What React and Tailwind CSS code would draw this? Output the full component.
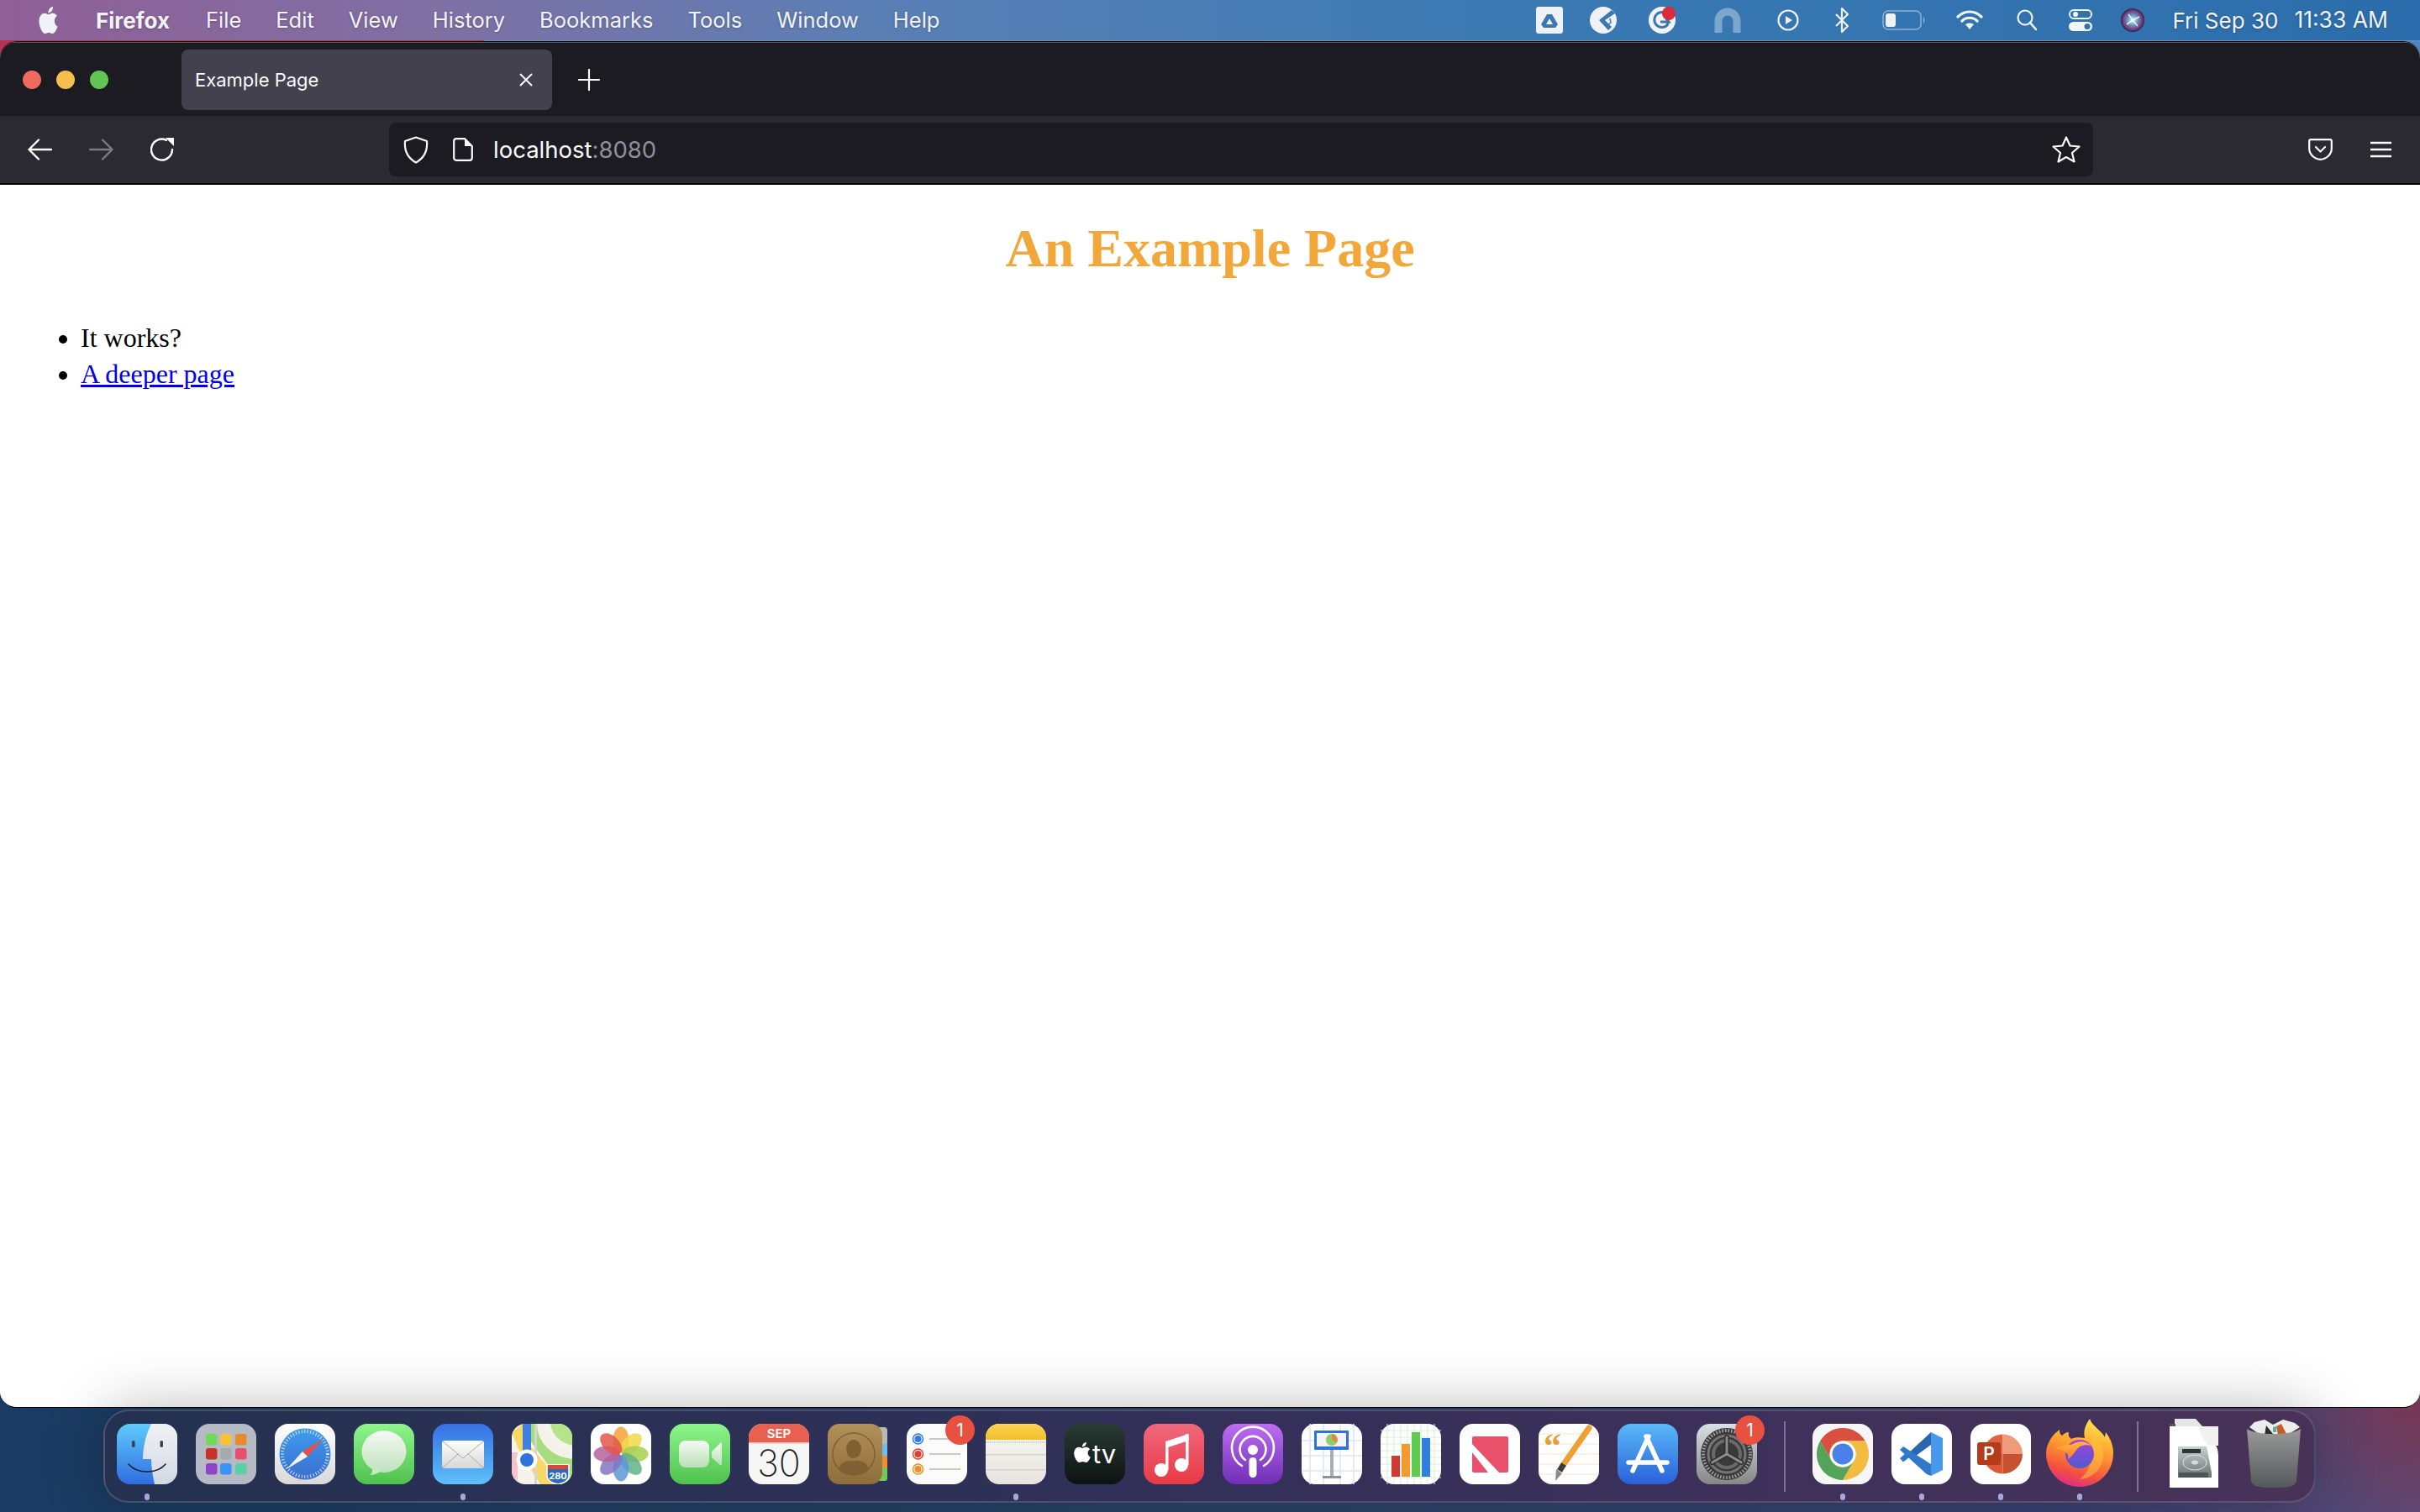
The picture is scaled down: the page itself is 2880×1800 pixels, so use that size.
import React from 'react'

const applePath =
  'M12.152 6.896c-.948 0-2.415-1.078-3.96-1.04-2.04.027-3.91 1.183-4.961 3.014-2.117 3.675-.546 9.103 1.519 12.09 1.013 1.454 2.208 3.09 3.792 3.039 1.52-.065 2.09-.987 3.935-.987 1.831 0 2.35.987 3.96.948 1.637-.026 2.676-1.48 3.676-2.948 1.156-1.688 1.636-3.325 1.662-3.415-.039-.013-3.182-1.221-3.22-4.857-.026-3.04 2.48-4.494 2.597-4.559-1.429-2.09-3.623-2.324-4.39-2.376-2-.156-3.675 1.09-4.61 1.09zM15.53 3.83c.843-1.012 1.4-2.427 1.245-3.83-1.207.052-2.662.805-3.532 1.818-.78.896-1.454 2.338-1.273 3.714 1.338.104 2.715-.688 3.559-1.701'

const Grad = ({ id, from, to, x2 = 0, y2 = 1 }) => (
  <linearGradient id={id} x1="0" y1="0" x2={x2} y2={y2}>
    <stop offset="0" stopColor={from} />
    <stop offset="1" stopColor={to} />
  </linearGradient>
)

const Icon = ({ children }) => (
  <svg width="72" height="72" viewBox="0 0 72 72" className="block overflow-visible">
    {children}
  </svg>
)

const Finder = () => (
  <Icon>
    <defs>
      <Grad id="fi1" from="#5fcbfb" to="#2f6de2" />
      <Grad id="fi2" from="#f0f1f4" to="#d3d9e5" />
      <clipPath id="fic"><rect width="72" height="72" rx="16" /></clipPath>
    </defs>
    <g clipPath="url(#fic)">
      <rect width="72" height="72" fill="url(#fi1)" />
      <path d="M41 0 C35 12 31 28 31 42 L41 42 C41 52 43 63 45 72 L72 72 L72 0 Z" fill="url(#fi2)" />
    </g>
    <rect x="18" y="20" width="3.5" height="8" rx="1.7" fill="#3a3f4a" />
    <rect x="51.5" y="20" width="3.5" height="8" rx="1.7" fill="#3a3f4a" />
    <path d="M14 48 C24 60 48 60 58 48" fill="none" stroke="#1c1f28" strokeWidth="1.6" strokeLinecap="round" />
  </Icon>
)

const Launchpad = () => {
  const tiles = [
    [12, 12, '#6fdc55'], [29, 12, '#f8c234'], [47, 12, '#e88a2a'],
    [12, 29, '#c8322a'], [29, 29, '#a5aaad'], [47, 29, '#e8506a'],
    [12, 47, '#8f44c8'], [29, 47, '#3a94f5'], [47, 47, '#5ccfa8'],
  ]
  return (
    <Icon>
      <rect width="72" height="72" rx="16" fill="#b6bac5" />
      {tiles.map(([x, y, c]) => (
        <rect key={x + '-' + y} x={x} y={y} width="13.5" height="13.5" rx="3" fill={c} />
      ))}
    </Icon>
  )
}

const Safari = () => (
  <Icon>
    <defs>
      <Grad id="sa1" from="#ffffff" to="#d9d9d9" />
      <Grad id="sa2" from="#3f9bee" to="#3a6fd0" />
    </defs>
    <rect width="72" height="72" rx="16" fill="url(#sa1)" />
    <circle cx="36" cy="36" r="30.5" fill="url(#sa2)" />
    <circle cx="36" cy="36" r="27" fill="none" stroke="#ffffff" strokeOpacity="0.8" strokeWidth="4" strokeDasharray="1 2.5" />
    <polygon points="58,18 33,33 39,39" fill="#e8503f" />
    <polygon points="14,54 33,33 39,39" fill="#f3f3f3" />
  </Icon>
)

const Messages = () => (
  <Icon>
    <defs>
      <Grad id="me1" from="#8ef58b" to="#4fc24d" />
      <Grad id="me2" from="#f6f9f4" to="#bfe2bd" />
    </defs>
    <rect width="72" height="72" rx="16" fill="url(#me1)" />
    <ellipse cx="36" cy="33" rx="26.5" ry="25" fill="url(#me2)" />
    <path d="M22 50 C23 57 21 60 19 61 C25 61 31 58 33 55 Z" fill="#c8e7c5" />
  </Icon>
)

const Mail = () => (
  <Icon>
    <defs>
      <Grad id="ma1" from="#3570e4" to="#5fc0f9" />
      <Grad id="ma2" from="#ffffff" to="#d6d6d6" />
    </defs>
    <rect width="72" height="72" rx="16" fill="url(#ma1)" />
    <rect x="11" y="20" width="50" height="33" rx="3" fill="url(#ma2)" />
    <path d="M12 21 L36 41 L60 21 M12 52 L30 36 M60 52 L42 36" fill="none" stroke="#aaaaaa" strokeWidth="1" />
  </Icon>
)

const Maps = () => (
  <Icon>
    <defs>
      <clipPath id="mpc"><rect width="72" height="72" rx="16" /></clipPath>
    </defs>
    <g clipPath="url(#mpc)">
      <rect width="72" height="72" fill="#f5f3ea" />
      <path d="M32 0 C32 24 48 36 72 40 L72 72 L60 72 L22 20 L22 0 Z" fill="#a6dd7c" />
      <path d="M46 0 C48 14 58 22 72 26 L72 0 Z" fill="#b4e58a" />
      <path d="M34 0 C34 20 50 36 72 38" fill="none" stroke="#f4f1e6" strokeWidth="8" />
      <path d="M0 10 L8 30 L34 72 L60 72 L22 26 L14 0 Z" fill="#f7d766" />
      <rect x="0" y="34" width="7" height="38" fill="#f4c3cb" />
      <rect x="25" y="0" width="3" height="72" fill="#d6d6cd" transform="translate(2 0)" />
      <rect x="13" y="0" width="10" height="40" fill="#3f7fe0" />
      <circle cx="18" cy="43" r="12.5" fill="#ffffff" />
      <circle cx="18" cy="43" r="8" fill="#2f74dd" />
      <path d="M42 49 L68 49 L68 62 C68 68 60 71 55 72 C50 71 42 68 42 62 Z" fill="#2c6ac0" stroke="#ffffff" strokeWidth="1.5" />
      <rect x="43" y="49" width="24" height="5" fill="#d9463c" />
      <text x="55" y="66" textAnchor="middle" fontFamily="Inter, sans-serif" fontSize="11" fontWeight="700" fill="#ffffff">280</text>
    </g>
  </Icon>
)

const Photos = () => {
  const petals = [
    [0, '#f2a13a'], [45, '#f2d94a'], [90, '#a6cf4f'], [135, '#63b287'],
    [180, '#5e98d6'], [225, '#8574c0'], [270, '#b7609f'], [315, '#e2574a'],
  ]
  return (
    <Icon>
      <rect width="72" height="72" rx="16" fill="#ffffff" />
      {petals.map(([a, c]) => (
        <ellipse key={a} cx="36" cy="19.5" rx="9.5" ry="16" fill={c} fillOpacity="0.85" transform={`rotate(${a} 36 36)`} />
      ))}
      <circle cx="36" cy="36" r="1.4" fill="#ffffff" />
    </Icon>
  )
}

const FaceTime = () => (
  <Icon>
    <defs>
      <Grad id="ft1" from="#8ef58b" to="#4fc24d" />
      <Grad id="ft2" from="#f7faf5" to="#b9dfb6" />
    </defs>
    <rect width="72" height="72" rx="16" fill="url(#ft1)" />
    <rect x="11" y="20" width="36" height="32" rx="8" fill="url(#ft2)" />
    <path d="M50 33 L60 23 C61 22 62 23 62 24 L62 48 C62 49 61 50 60 49 L50 40 Z" fill="url(#ft2)" />
  </Icon>
)

const Calendar = () => (
  <Icon>
    <defs>
      <clipPath id="cac"><rect width="72" height="72" rx="16" /></clipPath>
    </defs>
    <g clipPath="url(#cac)">
      <rect width="72" height="72" fill="#f6f6f4" />
      <rect width="72" height="22" fill="#e8604f" />
      <rect y="22" width="72" height="1.5" fill="#f2c0b8" />
    </g>
    <text x="36" y="17" textAnchor="middle" fontFamily="Inter, sans-serif" fontSize="15" fontWeight="600" fill="#ffffff">SEP</text>
    <text x="36" y="62" textAnchor="middle" fontFamily="Inter, sans-serif" fontSize="43" fontWeight="200" fill="#222222">30</text>
  </Icon>
)

const Contacts = () => (
  <Icon>
    <defs>
      <Grad id="co1" from="#b1905a" to="#8f6d3a" />
    </defs>
    <rect x="50" y="4" width="21" height="22" rx="4" fill="#b9b9b4" />
    <rect x="50" y="24" width="21" height="16" fill="#6fbcf0" />
    <rect x="50" y="38" width="21" height="16" fill="#ee9030" />
    <rect x="50" y="52" width="21" height="16" rx="3" fill="#6ecb5c" />
    <rect width="65" height="72" rx="14" fill="url(#co1)" />
    <circle cx="31" cy="36" r="25" fill="none" stroke="#7f6033" strokeWidth="1.5" />
    <ellipse cx="31" cy="30" rx="9" ry="11" fill="#7f6033" />
    <path d="M13 54 C16 44 24 44 31 44 C38 44 46 44 49 54 C44 60 37 61 31 61 C25 61 18 60 13 54 Z" fill="#7f6033" />
  </Icon>
)

const Reminders = () => {
  const rows = [[18, '#2f7be6'], [36, '#e23d33'], [54, '#ee9020']]
  return (
    <Icon>
      <rect width="72" height="72" rx="16" fill="#fbfbfa" />
      {rows.map(([y, c]) => (
        <g key={y}>
          <circle cx="13.5" cy={y} r="6" fill="none" stroke={c} strokeWidth="1.5" />
          <circle cx="13.5" cy={y} r="4" fill={c} />
          <rect x="27" y={y - 1} width="37" height="2" fill="#c9c9c9" />
        </g>
      ))}
    </Icon>
  )
}

const Notes = () => (
  <Icon>
    <defs>
      <Grad id="no1" from="#fbd650" to="#f2bd2e" />
      <Grad id="no2" from="#f8f7f2" to="#e6e4dd" />
      <clipPath id="noc"><rect width="72" height="72" rx="16" /></clipPath>
    </defs>
    <g clipPath="url(#noc)">
      <rect width="72" height="72" fill="url(#no2)" />
      <rect width="72" height="19" fill="url(#no1)" />
      <line x1="0" y1="22" x2="72" y2="22" stroke="#b5b3ab" strokeWidth="1.5" strokeDasharray="1 1.5" />
      <rect y="36" width="72" height="1.5" fill="#d4d2ca" />
      <rect y="54" width="72" height="1.5" fill="#d4d2ca" />
    </g>
  </Icon>
)

const AppleTv = () => (
  <Icon>
    <defs>
      <Grad id="tv1" from="#2a3b34" to="#0e1212" />
    </defs>
    <rect width="72" height="72" rx="16" fill="url(#tv1)" />
    <svg x="9" y="21" width="24" height="26" viewBox="0 0 24 24">
      <path d={applePath} fill="#ffffff" />
    </svg>
    <text x="33" y="47" fontFamily="Inter, sans-serif" fontSize="31" fontWeight="400" fill="#ffffff">tv</text>
  </Icon>
)

const Music = () => (
  <Icon>
    <defs>
      <Grad id="mu1" from="#f0687c" to="#e83a45" />
    </defs>
    <rect width="72" height="72" rx="16" fill="url(#mu1)" />
    <circle cx="21" cy="55" r="8" fill="#ffffff" />
    <circle cx="45" cy="49" r="8" fill="#ffffff" />
    <rect x="26" y="21" width="3.5" height="34" fill="#ffffff" />
    <rect x="50" y="12" width="3.5" height="37" fill="#ffffff" />
    <polygon points="26,21 53.5,12 53.5,20 26,29" fill="#ffffff" />
  </Icon>
)

const Podcasts = () => (
  <Icon>
    <defs>
      <Grad id="po1" from="#bd6ef1" to="#6f2eb6" />
    </defs>
    <rect width="72" height="72" rx="16" fill="url(#po1)" />
    <g fill="none" stroke="#ffffff" strokeWidth="2.6" strokeLinecap="round">
      <path d="M23 50 A25 25 0 1 1 49 50" />
      <path d="M27 43 A15.5 15.5 0 1 1 45 43" />
    </g>
    <circle cx="36" cy="31" r="6" fill="#ffffff" />
    <rect x="31.5" y="40" width="9" height="24" rx="4.5" fill="#ffffff" />
  </Icon>
)

const Keynote = () => (
  <Icon>
    <rect width="72" height="72" rx="16" fill="#ffffff" />
    <g stroke="#dce8f5" strokeWidth="1.5" fill="none">
      <path d="M0 20 H72 M0 38 H72 M0 56 H72 M10 0 V72 M26 0 V72 M46 0 V72 M62 0 V72" />
    </g>
    <rect x="15" y="8" width="41" height="23" rx="1" fill="#2f72dc" />
    <rect x="18" y="11" width="35" height="16" fill="#f4f4f4" />
    <circle cx="36" cy="19" r="7" fill="#8ccf6a" />
    <path d="M36 19 L36 12 A7 7 0 0 1 42 22 Z" fill="#e8893a" />
    <rect x="34" y="31" width="4" height="31" fill="#a6aeb8" />
    <rect x="25" y="62" width="22" height="3" fill="#8d939b" />
  </Icon>
)

const Numbers = () => (
  <Icon>
    <rect width="72" height="72" rx="16" fill="#ffffff" />
    <g stroke="#d8efd6" strokeWidth="1" fill="none">
      <path d="M0 8 H72 M0 16 H72 M0 24 H72 M0 32 H72 M0 40 H72 M0 48 H72 M0 56 H72 M0 64 H72 M8 0 V72 M16 0 V72 M24 0 V72 M32 0 V72 M40 0 V72 M48 0 V72 M56 0 V72 M64 0 V72" />
    </g>
    <rect x="13" y="38" width="10" height="25" fill="#cf3a36" />
    <rect x="25" y="24" width="10" height="39" fill="#f09a30" />
    <rect x="37" y="10" width="10" height="53" fill="#5fcb4f" />
    <rect x="49" y="17" width="10" height="46" fill="#2f7fdc" />
  </Icon>
)

const News = () => (
  <Icon>
    <rect width="72" height="72" rx="16" fill="#ffffff" />
    <rect x="15" y="15" width="43" height="43" rx="2" fill="#e9506a" />
    <polygon points="15,24 15,34 34,58 47,58" fill="#ffffff" />
    <polygon points="26,15 38,15 58,44 58,54" fill="#e9506a" />
  </Icon>
)

const Pages = () => (
  <Icon>
    <rect width="72" height="72" rx="16" fill="#ffffff" />
    <g stroke="#f8e3cc" strokeWidth="1.2" fill="none">
      <path d="M0 12 H72 M0 24 H72 M0 36 H72 M0 48 H72 M0 60 H72" />
    </g>
    <text x="6" y="40" fontFamily="Liberation Serif, serif" fontSize="42" fontWeight="700" fill="#e99c3c">“</text>
    <line x1="60" y1="5" x2="30" y2="48" stroke="#f0a030" strokeWidth="7" strokeLinecap="round" />
    <line x1="30" y1="48" x2="25" y2="56" stroke="#3d3d3d" strokeWidth="7" />
    <polygon points="21,54 28,59 20,68" fill="#8a8a8a" />
  </Icon>
)

const AppStore = () => (
  <Icon>
    <defs>
      <Grad id="as1" from="#5ab9f9" to="#2a60d8" />
    </defs>
    <rect width="72" height="72" rx="16" fill="url(#as1)" />
    <g stroke="#ffffff" strokeWidth="5.5" strokeLinecap="round">
      <line x1="34" y1="15" x2="53" y2="56" />
      <line x1="37" y1="15" x2="18" y2="56" />
      <line x1="13" y1="46" x2="59" y2="46" />
    </g>
  </Icon>
)

const Settings = () => (
  <Icon>
    <defs>
      <Grad id="se1" from="#d8e0e4" to="#868686" />
    </defs>
    <rect width="72" height="72" rx="16" fill="url(#se1)" />
    <circle cx="36" cy="36" r="31" fill="#3a3a3a" />
    <circle cx="36" cy="36" r="28" fill="none" stroke="#a0a0a0" strokeWidth="4" strokeDasharray="1.6 2" />
    <circle cx="36" cy="36" r="22" fill="none" stroke="#767676" strokeWidth="3" />
    <circle cx="36" cy="36" r="16" fill="none" stroke="#6a6a6a" strokeWidth="4" />
    <g stroke="#2f2f2f" strokeWidth="6" strokeLinecap="round">
      <line x1="36" y1="36" x2="36" y2="16" />
      <line x1="36" y1="36" x2="18.7" y2="46" />
      <line x1="36" y1="36" x2="53.3" y2="46" />
    </g>
    <g stroke="#8c8c8c" strokeWidth="3" strokeLinecap="round">
      <line x1="36" y1="36" x2="36" y2="16" />
      <line x1="36" y1="36" x2="18.7" y2="46" />
      <line x1="36" y1="36" x2="53.3" y2="46" />
    </g>
  </Icon>
)

const Chrome = () => (
  <Icon>
    <rect width="72" height="72" rx="16" fill="#f6f6f6" />
    <path d="M9.15 20.5 A31 31 0 0 1 62.85 20.5 L36 20.5 A15.5 15.5 0 0 0 22.6 43.75 Z" fill="#d9503f" />
    <path d="M62.85 20.5 A31 31 0 0 1 36 67 L49.4 43.75 A15.5 15.5 0 0 0 36 20.5 Z" fill="#f3bb3f" />
    <path d="M36 67 A31 31 0 0 1 9.15 20.5 L22.6 43.75 A15.5 15.5 0 0 0 49.4 43.75 Z" fill="#53a458" />
    <circle cx="36" cy="36" r="15.5" fill="#ffffff" />
    <circle cx="36" cy="36" r="12.5" fill="#4a80e8" />
  </Icon>
)

const VsCode = () => (
  <Icon>
    <rect width="72" height="72" rx="16" fill="#ffffff" />
    <polygon points="10,41 14,45.5 25,37 20,32.5" fill="#2f77c8" />
    <polygon points="47,10 47,25 25,41 19,36" fill="#2a66ae" />
    <polygon points="10,31 14,27 47,48 47,62 42,60" fill="#2f78ca" />
    <polygon points="47,10 61,17 61,55 47,62" fill="#4899ea" />
  </Icon>
)

const PowerPoint = () => (
  <Icon>
    <rect width="72" height="72" rx="16" fill="#ffffff" />
    <path d="M38.5 36 L38.5 12.5 A23.5 23.5 0 0 0 15 36 Z" fill="#e0643f" />
    <path d="M38.5 36 L38.5 12.5 A23.5 23.5 0 0 1 62 36 Z" fill="#f09a7c" />
    <path d="M38.5 36 L62 36 A23.5 23.5 0 0 1 38.5 59.5 Z" fill="#c75231" />
    <path d="M38.5 36 L38.5 59.5 A23.5 23.5 0 0 1 15 36 Z" fill="#d95a36" />
    <rect x="8" y="22" width="28" height="27" rx="3" fill="#b43b1c" />
    <text x="22" y="43" textAnchor="middle" fontFamily="Inter, sans-serif" fontSize="21" fontWeight="600" fill="#ffffff">P</text>
  </Icon>
)

const Firefox = () => (
  <Icon>
    <defs>
      <linearGradient id="ff1" x1="0.7" y1="0" x2="0.4" y2="1">
        <stop offset="0" stopColor="#ffe94d" />
        <stop offset="0.45" stopColor="#ff9a2e" />
        <stop offset="0.8" stopColor="#f3503f" />
        <stop offset="1" stopColor="#de2f86" />
      </linearGradient>
      <Grad id="ff2" from="#a53fd8" to="#4f5ccc" />
      <Grad id="ff3" from="#ffb83e" to="#ff7a2a" />
    </defs>
    <path d="M48 -6 C50 2 62 8 66 16 L67 10 C73 18 76 26 76 35 C76 58 58 75 36 75 C14 75 -4 58 -4 35 C-4 26 1 18 6 12 L12 7 C12 11 13 13 15 14 C17 12 20 10 23 10 C22 13 23 16 26 18 C30 16 36 16 42 17 C40 8 43 1 48 -6 Z" fill="url(#ff1)" />
    <path d="M48 8 C52 16 62 22 64 34 C66 50 52 66 36 66 C50 56 54 36 48 8 Z" fill="#ffc23e" fillOpacity="0.55" />
    <circle cx="36" cy="36" r="17" fill="url(#ff2)" />
    <path d="M7 29 C14 25 22 26 28 24 C34 20 44 20 50 26 C42 24 36 26 33 30 C28 36 26 40 22 42 C24 36 20 32 7 29 Z" fill="url(#ff3)" />
  </Icon>
)

const DiskDoc = () => (
  <Icon>
    <defs>
      <Grad id="dd1" from="#c8d2d2" to="#6a7272" />
    </defs>
    <path d="M11 -6 L36 -6 L44 3 L11 3 Z" fill="#e6e6e6" />
    <rect x="5" y="0" width="7" height="3" fill="#555555" />
    <path d="M5 3 L44 3 L50 18 C56 22 63 24 63 38 L63 76 L5 76 Z" fill="#ffffff" />
    <path d="M39 3 L63 3 L63 26 L52 26 C47 22 42 14 39 3 Z" fill="#f1f1f1" />
    <path d="M16 27 L50 27 L56 58 L56 64 L16 64 Z" fill="url(#dd1)" transform="translate(-1 0)" />
    <rect x="20" y="30" width="22" height="5" fill="#333333" />
    <ellipse cx="35" cy="46" rx="14" ry="9" fill="none" stroke="#e2e6e6" strokeWidth="1" />
    <ellipse cx="35" cy="46" rx="4" ry="2.5" fill="#d6dcdc" />
    <rect x="16" y="58" width="35" height="6" fill="#4f5555" />
  </Icon>
)

const Trash = () => (
  <Icon>
    <defs>
      <Grad id="tr1" from="#9a9a9a" to="#55585a" />
    </defs>
    <path d="M6 4 L12 -2 L24 -5 L34 1 L46 -5 L60 -1 L66 4 L50 14 L20 14 Z" fill="#ececec" />
    <polygon points="26,2 34,12 24,13" fill="#2b2b2b" />
    <polygon points="38,3 44,0 50,12 40,14" fill="#c2602a" />
    <polygon points="34,4 38,3 38,10 34,10" fill="#4cb5a0" />
    <path d="M3 6 C14 14 56 14 67 6 L62 68 C60 76 48 76 35 76 C22 76 10 76 8 68 Z" fill="url(#tr1)" />
  </Icon>
)

const dockApps = [
  { name: 'finder', Art: Finder, running: true },
  { name: 'launchpad', Art: Launchpad },
  { name: 'safari', Art: Safari },
  { name: 'messages', Art: Messages },
  { name: 'mail', Art: Mail, running: true },
  { name: 'maps', Art: Maps },
  { name: 'photos', Art: Photos },
  { name: 'facetime', Art: FaceTime },
  { name: 'calendar', Art: Calendar },
  { name: 'contacts', Art: Contacts },
  { name: 'reminders', Art: Reminders, badge: '1' },
  { name: 'notes', Art: Notes, running: true },
  { name: 'tv', Art: AppleTv },
  { name: 'music', Art: Music },
  { name: 'podcasts', Art: Podcasts },
  { name: 'keynote', Art: Keynote },
  { name: 'numbers', Art: Numbers },
  { name: 'news', Art: News },
  { name: 'pages', Art: Pages },
  { name: 'appstore', Art: AppStore },
  { name: 'settings', Art: Settings, badge: '1' },
]

const recentApps = [
  { name: 'chrome', Art: Chrome, running: true },
  { name: 'vscode', Art: VsCode, running: true },
  { name: 'powerpoint', Art: PowerPoint, running: true },
  { name: 'firefox', Art: Firefox, running: true },
]

const DockItem = ({ Art, running, badge }) => (
  <div className="relative flex flex-col items-center w-[72px]">
    <Art />
    {badge && (
      <div className="absolute left-[46px] top-[-10px] w-[35px] h-[35px] rounded-full bg-[#e8503f] flex items-center justify-center text-white text-[21px] font-['Inter',sans-serif]">
        {badge}
      </div>
    )}
    {running && <div className="mt-[11px] w-[6px] h-[8px] rounded-full bg-[#a9a6d8]" />}
  </div>
)

const DockSeparator = () => <div className="w-[2px] h-[84px] mx-[10px] mt-[-3px] bg-[#7f6f9f]" />

const MenuIcons = () => (
  <div className="flex items-center">
    <svg width="32" height="32" viewBox="0 0 32 32" className="ml-0">
      <rect width="32" height="32" rx="3" fill="#eef2f7" />
      <path d="M13 9 L19 9 L26 21 L23 25 L9 25 L6 21 Z" fill="#3b78b0" />
      <path d="M16 14 L20 21 L12 21 Z" fill="#eef2f7" />
    </svg>
    <svg width="32" height="32" viewBox="0 0 32 32" className="ml-[32px]">
      <circle cx="16" cy="16" r="16" fill="#eef2f7" />
      <path d="M26 4 L11 16 L22 28 L26 24 L18 16 L30 8 Z" fill="#3b78b0" />
      <path d="M24 14 L25 19 L22 21" fill="none" stroke="#3b78b0" strokeWidth="1.5" />
    </svg>
    <svg width="34" height="34" viewBox="0 0 34 34" className="ml-[38px]">
      <circle cx="16" cy="17" r="16" fill="#f2f5f8" />
      <path d="M22 10 A9 9 0 1 0 23 22 M14 19 L24 19 L21 15 M24 19 L21 24" fill="none" stroke="#3b78b0" strokeWidth="3" />
      <circle cx="24" cy="9" r="8" fill="#d92c3c" />
    </svg>
    <svg width="32" height="30" viewBox="0 0 32 30" className="ml-[44px]">
      <path d="M5 30 L5 16 A11 11 0 0 1 27 16 L27 30" fill="none" stroke="#ffffff" strokeOpacity="0.35" strokeWidth="9" />
    </svg>
    <svg width="26" height="26" viewBox="0 0 26 26" className="ml-[43px]">
      <circle cx="13" cy="13" r="11.5" fill="none" stroke="#eef2f7" strokeWidth="2.2" />
      <path d="M10 8 L18 13 L10 18 Z" fill="#eef2f7" />
    </svg>
    <svg width="18" height="32" viewBox="0 0 18 32" className="ml-[42px]">
      <path d="M2 9 L16 23 L9 30 L9 2 L16 9 L2 23" fill="none" stroke="#eef2f7" strokeWidth="2.2" strokeLinejoin="round" />
    </svg>
    <svg width="52" height="24" viewBox="0 0 52 24" className="ml-[39px]">
      <rect x="1" y="1" width="45" height="22" rx="6" fill="none" stroke="#ffffff" strokeOpacity="0.45" strokeWidth="1.5" />
      <rect x="4" y="4" width="12" height="16" rx="3" fill="#eef2f7" />
      <path d="M49 8 C51 10 51 14 49 16 Z" fill="#ffffff" fillOpacity="0.5" />
    </svg>
    <svg width="32" height="24" viewBox="0 0 32 24" className="ml-[36px]">
      <path d="M2 8 C10 0 22 0 30 8 M7 13 C12 8 20 8 25 13" fill="none" stroke="#f2f5f8" strokeWidth="3.2" strokeLinecap="round" />
      <path d="M11 17 C14 15 18 15 21 17 L16 23 Z" fill="#f2f5f8" />
    </svg>
    <svg width="24" height="26" viewBox="0 0 24 26" className="ml-[40px]">
      <circle cx="10" cy="10" r="8.5" fill="none" stroke="#f2f5f8" strokeWidth="2.2" />
      <line x1="16" y1="16" x2="23" y2="24" stroke="#f2f5f8" strokeWidth="2.6" strokeLinecap="round" />
    </svg>
    <svg width="28" height="26" viewBox="0 0 28 26" className="ml-[38px]">
      <rect x="1" y="1" width="26" height="10" rx="5" fill="none" stroke="#f2f5f8" strokeWidth="2" />
      <circle cx="8" cy="6" r="3" fill="#f2f5f8" />
      <rect y="15" width="28" height="11" rx="5.5" fill="#f2f5f8" />
      <circle cx="22" cy="20.5" r="3.5" fill="#3271ad" />
    </svg>
    <svg width="28" height="28" viewBox="0 0 28 28" className="ml-[34px]">
      <defs>
        <radialGradient id="siri" cx="0.5" cy="0.5" r="0.5">
          <stop offset="0" stopColor="#e8f4f8" />
          <stop offset="0.45" stopColor="#5f9ab8" />
          <stop offset="0.8" stopColor="#7a3a8a" />
          <stop offset="1" stopColor="#2a2440" />
        </radialGradient>
      </defs>
      <circle cx="14" cy="14" r="14" fill="url(#siri)" />
      <path d="M14 14 L9 7 M14 14 L22 10 M14 14 L7 19 M14 14 L20 21" stroke="#ffffff" strokeWidth="1.6" strokeOpacity="0.85" />
    </svg>
  </div>
)

const MenuBar = () => (
  <div className="shrink-0">
    <div className="h-[48px] flex items-center pl-[44px] pr-[38px] bg-[linear-gradient(90deg,#8f5f96_0%,#7f70a4_18%,#5a7fb5_36%,#3b7ab3_62%,#2b6dac_100%)] text-[#f2f3f8] font-['Inter',sans-serif] text-[25.5px] [text-shadow:0_1px_3px_rgba(0,0,0,0.25)]">
      <svg width="27" height="32" viewBox="0 0 24 24" preserveAspectRatio="none">
        <path d={applePath} fill="#f2f3f8" />
      </svg>
      <span className="ml-[43px] w-[90px] text-[26px] font-bold whitespace-nowrap">Firefox</span>
      <div className="ml-[41px] flex items-center gap-[41px]">
        <span>File</span>
        <span>Edit</span>
        <span>View</span>
        <span>History</span>
        <span>Bookmarks</span>
        <span>Tools</span>
        <span>Window</span>
        <span>Help</span>
      </div>
      <div className="ml-auto flex items-center">
        <MenuIcons />
        <span className="ml-[33px] text-[26px] whitespace-nowrap">Fri Sep 30</span>
        <span className="ml-[19px] text-[26.5px] whitespace-nowrap">11:33 AM</span>
      </div>
    </div>
    <div className="h-px bg-[linear-gradient(90deg,#b8324f_0%,#b8324f_20%,#5f93c7_20%,#5f93c7_100%)]" />
  </div>
)

const TabStrip = () => (
  <div className="h-[88px] flex items-center pl-[27px] bg-[#1c1b22] border-t border-[#55545c]">
    <div className="flex items-center gap-[18px]">
      <div className="w-[22px] h-[22px] rounded-full bg-[#ee6a5f]" />
      <div className="w-[22px] h-[22px] rounded-full bg-[#f5bf4f]" />
      <div className="w-[22px] h-[22px] rounded-full bg-[#61c554]" />
    </div>
    <div className="ml-[87px] w-[441px] h-[72px] rounded-[8px] bg-[#42414d] flex items-center pl-[16px] pr-[22px] text-[#fbfbfe] text-[22px] font-['Inter',sans-serif]">
      <span className="pt-[2px] whitespace-nowrap">Example Page</span>
      <svg width="18" height="18" viewBox="0 0 18 18" className="ml-auto">
        <path d="M2 2 L16 16 M16 2 L2 16" stroke="#fbfbfe" strokeWidth="2" />
      </svg>
    </div>
    <svg width="26" height="26" viewBox="0 0 26 26" className="ml-[31px]">
      <path d="M13 1 V25 M1 13 H25" stroke="#fbfbfe" strokeWidth="2.2" strokeLinecap="round" />
    </svg>
  </div>
)

const NavArrow = ({ color, flip }) => (
  <svg width="29" height="26" viewBox="0 0 29 26" className={flip ? 'scale-x-[-1]' : ''}>
    <path d="M13 1.5 L1.5 13 L13 24.5 M1.5 13 H28" fill="none" stroke={color} strokeWidth="2.4" strokeLinecap="round" strokeLinejoin="round" />
  </svg>
)

const Toolbar = () => (
  <div className="h-[80px] flex items-center pl-[33px] bg-[#2b2a33] border-b-[2px] border-black box-content">
    <NavArrow color="#fbfbfe" />
    <div className="ml-[44px]">
      <NavArrow color="#7b7a82" flip />
    </div>
    <svg width="29" height="28" viewBox="0 0 29 28" className="ml-[44px]">
      <path d="M26 14 A12.5 12.5 0 1 1 19 2.8" fill="none" stroke="#fbfbfe" strokeWidth="2.4" strokeLinecap="round" />
      <path d="M18 0 L28 0 L28 10 Z" fill="#fbfbfe" />
    </svg>
    <div className="ml-[255px] w-[2028px] h-[64px] rounded-[8px] bg-[#1c1b22] flex items-center pl-[17px] pr-[15px] font-['Inter',sans-serif] text-[27.5px]">
      <svg width="30" height="33" viewBox="0 0 30 33">
        <path d="M15 1.5 L28 6 C29 18 25 26 15 31.5 C5 26 1 18 2 6 Z" fill="none" stroke="#fbfbfe" strokeWidth="2.2" strokeLinejoin="round" />
      </svg>
      <svg width="24" height="28" viewBox="0 0 24 28" className="ml-[29px]">
        <path d="M4 1.2 L14 1.2 L22.8 10 L22.8 24 C22.8 25.8 21.6 26.8 20 26.8 L4 26.8 C2.4 26.8 1.2 25.8 1.2 24 L1.2 4 C1.2 2.2 2.4 1.2 4 1.2 Z" fill="none" stroke="#fbfbfe" strokeWidth="2.2" />
        <path d="M14 1.2 L14 10 L22.8 10 Z" fill="#fbfbfe" />
      </svg>
      <span className="ml-[24px] pt-[1px] text-[#fbfbfe] whitespace-nowrap">
        localhost<span className="text-[#8f8f9d]">:8080</span>
      </span>
      <svg width="34" height="32" viewBox="0 0 34 32" className="ml-auto">
        <path d="M17 1.5 L21.5 11.5 L32.5 12.5 L24 20 L26.5 30.5 L17 25 L7.5 30.5 L10 20 L1.5 12.5 L12.5 11.5 Z" fill="none" stroke="#fbfbfe" strokeWidth="2.2" strokeLinejoin="round" />
      </svg>
    </div>
    <svg width="29" height="26" viewBox="0 0 29 26" className="ml-[256px]">
      <path d="M3 1.2 L26 1.2 C27 1.2 27.8 2 27.8 3 L27.8 12 C27.8 19 21 24.8 14.5 24.8 C8 24.8 1.2 19 1.2 12 L1.2 3 C1.2 2 2 1.2 3 1.2 Z" fill="none" stroke="#fbfbfe" strokeWidth="2.2" />
      <path d="M9 10 L14.5 15.5 L20 10" fill="none" stroke="#fbfbfe" strokeWidth="2.2" strokeLinecap="round" strokeLinejoin="round" />
    </svg>
    <svg width="25" height="20" viewBox="0 0 25 20" className="ml-[45px]">
      <path d="M0 2 H25 M0 10 H25 M0 18 H25" stroke="#fbfbfe" strokeWidth="2.4" />
    </svg>
  </div>
)

const PageContent = () => (
  <div className="flex-1 bg-white text-black font-['Liberation_Serif',serif]">
    <h1 className="mt-[39px] text-center text-[64px] leading-[74px] font-bold text-[#f2a73b]">An Example Page</h1>
    <ul className="mt-[48px] pl-[96px] list-disc text-[32px] leading-[43px]">
      <li>It works?</li>
      <li>
        <a href="#deeper" className="text-[#0000ee] underline">A deeper page</a>
      </li>
    </ul>
  </div>
)

const Dock = () => (
  <div className="relative z-10 ml-[123px] w-[2633px] h-[111px] mt-[2px] rounded-[30px] border-2 border-[#ffffff26] bg-[linear-gradient(90deg,#243150_0%,#2f3058_40%,#3b305a_70%,#483258_100%)] shadow-[0_0_70px_rgba(0,0,0,0.28)] pl-[14px] pt-[15px] flex items-start gap-[22px]">
    {dockApps.map(({ name, ...app }) => (
      <DockItem key={name} {...app} />
    ))}
    <DockSeparator />
    {recentApps.map(({ name, ...app }) => (
      <DockItem key={name} {...app} />
    ))}
    <DockSeparator />
    <DockItem Art={DiskDoc} />
    <DockItem Art={Trash} />
  </div>
)

export default function App() {
  return (
    <div className="w-[2880px] h-[1800px] overflow-hidden flex flex-col bg-[radial-gradient(circle_at_0_50px,#b8324f_0,#b8324f_24px,transparent_25px),radial-gradient(circle_at_100%_50px,#4f86bd_0,#4f86bd_24px,transparent_25px),radial-gradient(circle_at_100%_92%,#7a3550_0,#7a355000_170px),linear-gradient(90deg,#1a3b62_0%,#2b4568_50%,#3a4272_85%,#5a4a78_100%)]">
      <MenuBar />
      <div className="h-[1627px] shrink-0 flex flex-col overflow-hidden rounded-[20px] border-y border-black bg-white">
        <TabStrip />
        <Toolbar />
        <PageContent />
      </div>
      <Dock />
    </div>
  )
}
